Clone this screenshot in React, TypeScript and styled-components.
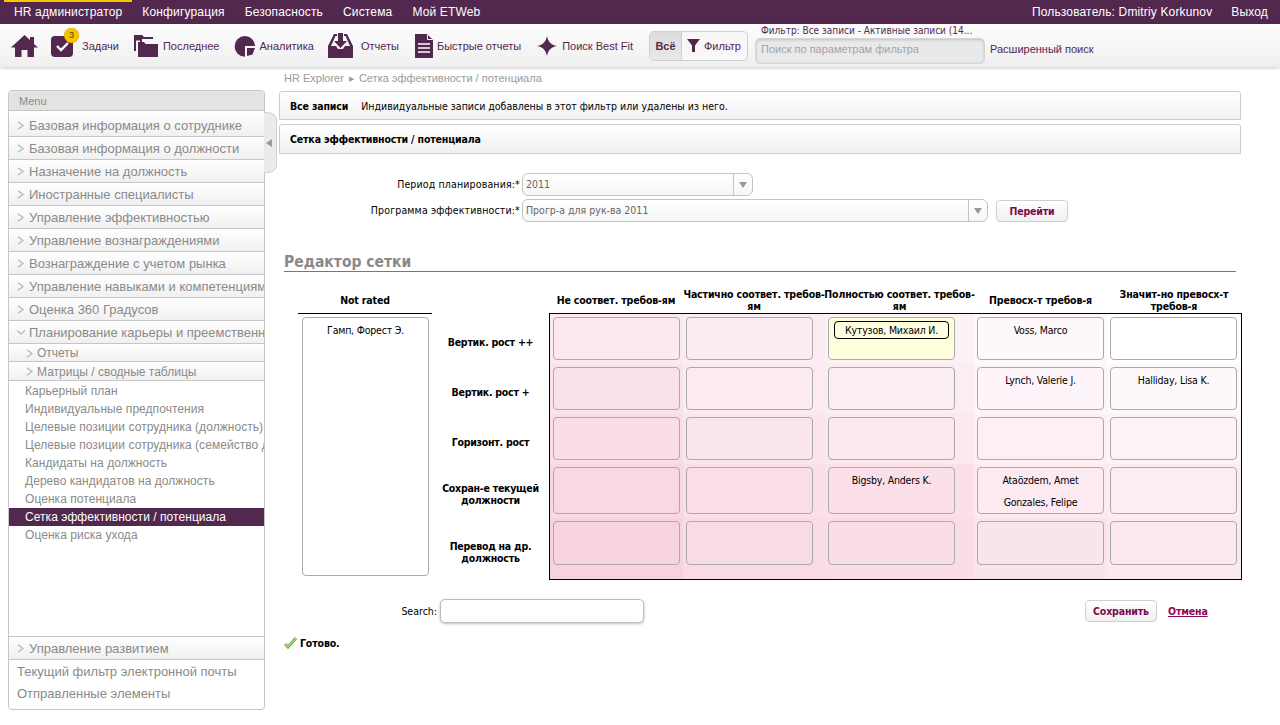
import * as React from 'react';
import styled, { createGlobalStyle } from 'styled-components';

const PURPLE = '#52284f';
const SANS = '"Liberation Sans", Arial, sans-serif';
const VERDANA = '"DejaVu Sans Condensed", "DejaVu Sans", Verdana, sans-serif';

const GlobalStyle = createGlobalStyle`
  html, body { margin: 0; padding: 0; background: #fff; }
  body { font-family: ${SANS}; height: 725px; overflow: hidden; }
  * { box-sizing: border-box; }
`;

const NavBar = styled.div`
  height: 24px;
  background: ${PURPLE};
  display: flex;
  align-items: center;
  padding: 0 12px 0 14px;
  font-size: 12px;
  letter-spacing: 0.15px;
  color: #fff;
`;

const NavItem = styled.span<{ $active?: boolean }>`
  position: relative;
  margin-right: 20px;
  white-space: nowrap;
  &::before {
    content: ${(p) => (p.$active ? '""' : 'none')};
    position: absolute;
    left: -10px;
    right: -10px;
    top: -6px;
    height: 3px;
    background: #f9c400;
  }
`;

const NavRight = styled.div`
  margin-left: auto;
  display: flex;
  gap: 19px;
`;

const Toolbar = styled.div`
  height: 43px;
  background: linear-gradient(#fdfdfd, #efefef);
  box-shadow: 0 1px 3px rgba(0, 0, 0, 0.22);
  display: flex;
  align-items: center;
  padding-left: 11px;
  font-size: 11px;
  color: ${PURPLE};
  position: relative;
`;

const Tool = styled.div<{ $gap: number; $after: number }>`
  position: relative;
  display: flex;
  align-items: center;
  gap: ${(p) => p.$gap}px;
  margin-right: ${(p) => p.$after}px;
  white-space: nowrap;
`;

const Badge = styled.span`
  position: absolute;
  left: 13px;
  top: -7px;
  width: 15px;
  height: 15px;
  border-radius: 50%;
  background: #f8c400;
  color: #5a3d00;
  font-size: 9px;
  line-height: 15px;
  text-align: center;
  box-shadow: 0 0 1px rgba(0, 0, 0, 0.4);
`;

const Segment = styled.div`
  display: flex;
  height: 30px;
  width: 99px;
  margin-left: 2px;
  border: 1px solid #cfcfcf;
  border-radius: 5px;
  overflow: hidden;
  background: #f7f7f7;
`;

const SegmentAll = styled.div`
  width: 32px;
  background: linear-gradient(#dcdcdc, #e8e8e8);
  border-right: 1px solid #cfcfcf;
  font-weight: bold;
  line-height: 28px;
  text-align: center;
`;

const SegmentFilter = styled.div`
  display: flex;
  align-items: center;
  gap: 4px;
  padding-left: 5px;
`;

const FilterBox = styled.div`
  width: 230px;
  margin-left: 7px;
  margin-top: -2px;
`;

const FilterCaption = styled.div`
  font-family: ${VERDANA};
  font-size: 10px;
  line-height: 12px;
  padding-left: 6px;
  margin-bottom: 1px;
  white-space: nowrap;
  overflow: hidden;
`;

const FilterInput = styled.div`
  height: 26px;
  border: 1px solid #d5d5d5;
  border-radius: 5px;
  background: #e9e9e9;
  box-shadow: inset 0 1px 3px rgba(0, 0, 0, 0.18);
  color: #a5a5a5;
  font-size: 11px;
  line-height: 20px;
  padding-left: 5px;
`;

const AdvancedLink = styled.span`
  margin: 7px 0 0 5px;
`;

const Body = styled.div`
  display: flex;
  padding: 0 8px;
`;

const Sidebar = styled.nav`
  position: relative;
  flex: none;
  width: 257px;
  height: 620px;
  margin-top: 23px;
  border: 1px solid #c6c6c6;
  border-radius: 4px;
  display: flex;
  flex-direction: column;
  color: #8a8a8a;
  font-size: 13px;
`;

const MenuHead = styled.div`
  flex: none;
  height: 20px;
  background: #e3e3e1;
  border-bottom: 1px solid #c6c6c6;
  border-radius: 3px 3px 0 0;
  font-size: 11px;
  line-height: 20px;
  padding-left: 10px;
`;

const Section = styled.div<{ $first?: boolean }>`
  flex: none;
  height: ${(p) => (p.$first ? 26 : 23)}px;
  padding-top: ${(p) => (p.$first ? 3 : 0)}px;
  background: linear-gradient(#fff, #f0f0f0);
  border-bottom: 1px solid #c6c6c6;
  display: flex;
  align-items: center;
  gap: 4px;
  padding-left: 8px;
  white-space: nowrap;
  overflow: hidden;
`;

const SubSection = styled.div<{ $h: number }>`
  flex: none;
  height: ${(p) => p.$h}px;
  padding-top: 1px;
  background: linear-gradient(#fff, #f0f0f0);
  border-bottom: 1px solid #c6c6c6;
  display: flex;
  align-items: center;
  gap: 3px;
  padding-left: 17px;
  font-size: 12px;
`;

const ChevronSvg = styled.svg`
  flex: none;
`;

const LeafList = styled.div`
  flex: 1;
  padding-top: 1px;
  border-bottom: 1px solid #c6c6c6;
`;

const Leaf = styled.div<{ $active?: boolean }>`
  height: 18px;
  line-height: 18px;
  font-size: 12px;
  letter-spacing: 0.05px;
  padding-left: 16px;
  white-space: nowrap;
  overflow: hidden;
  background: ${(p) => (p.$active ? PURPLE : 'transparent')};
  color: ${(p) => (p.$active ? '#fff' : '#8a8a8a')};
`;

const BottomLink = styled.div`
  flex: none;
  height: 22px;
  line-height: 22px;
  padding-left: 8px;
`;

const BottomLinks = styled.div`
  padding: 1px 0 4px;
`;

const CollapseTab = styled.div`
  position: absolute;
  left: 255px;
  top: 21px;
  width: 13px;
  height: 61px;
  background: #ebebeb;
  border: 1px solid #d2d2d2;
  border-left: none;
  border-radius: 0 10px 10px 0 / 0 8px 8px 0;
  display: flex;
  align-items: center;
  padding-left: 2px;
  &::after {
    content: '';
    border-style: solid;
    border-width: 4px 6px 4px 0;
    border-color: transparent #9a9a9a transparent transparent;
  }
`;

const Main = styled.main`
  flex: none;
  width: 962px;
  margin-left: 14px;
  font-family: ${VERDANA};
  font-size: 10.5px;
  color: #000;
`;

const Breadcrumb = styled.div`
  height: 22px;
  line-height: 22px;
  padding-left: 5px;
  font-family: ${SANS};
  font-size: 11px;
  color: #9a9a9a;
`;

const Crumb = styled.span`
  margin: 0 5px;
  font-size: 7px;
  vertical-align: 1px;
`;

const Panel = styled.div<{ $h: number; $top: number }>`
  height: ${(p) => p.$h}px;
  margin-top: ${(p) => p.$top}px;
  border: 1px solid #ccc;
  border-radius: 3px 3px 0 0;
  background: linear-gradient(#fff, #f1f1f1);
  display: flex;
  align-items: center;
  padding-left: 10px;
`;

const PanelTitle = styled.b`
  letter-spacing: -0.15px;
  margin-right: 13px;
`;

const Form = styled.div`
  margin-top: 19px;
  display: flex;
  flex-direction: column;
  gap: 3px;
`;

const FormRow = styled.div`
  display: flex;
  align-items: center;
  height: 23px;
`;

const FormLabel = styled.label`
  width: 242px;
  text-align: right;
  padding: 0 1px 2px 0;
  margin-right: 1px;
  letter-spacing: 0.15px;
`;

const Select = styled.div<{ $w: number }>`
  width: ${(p) => p.$w}px;
  height: 23px;
  border: 1px solid #c4c4c4;
  border-radius: 6px;
  background: linear-gradient(#fff, #f6f6f6);
  color: #666;
  line-height: 21px;
  padding-left: 3px;
  display: flex;
  justify-content: space-between;
`;

const SelectArrow = styled.div`
  width: 19px;
  border-left: 1px solid #c4c4c4;
  display: flex;
  align-items: center;
  justify-content: center;
  &::after {
    content: '';
    border-style: solid;
    border-width: 6px 4px 0 4px;
    border-color: #999 transparent transparent transparent;
  }
`;

const Button = styled.div<{ $left: number }>`
  width: 72px;
  height: 22px;
  margin-left: ${(p) => p.$left}px;
  border: 1px solid #cfcfcf;
  border-radius: 4px;
  background: linear-gradient(#fff, #efefef);
  color: #7a0a4c;
  font-weight: bold;
  letter-spacing: -0.15px;
  line-height: 20px;
  text-align: center;
`;

const Heading = styled.h2`
  width: 952px;
  height: 22px;
  margin: 28px 0 0 5px;
  border-bottom: 1px solid #777;
  color: #8a8a8a;
  font-size: 15.5px;
  line-height: 24px;
  font-weight: bold;
`;

const Editor = styled.div`
  display: flex;
  margin: 13px 0 0 19px;
`;

const NotRatedColumn = styled.div`
  width: 134px;
  flex: none;
`;

const NotRatedHead = styled.div`
  height: 29px;
  border-bottom: 1px solid #000;
  font-weight: bold;
  letter-spacing: -0.15px;
  text-align: center;
  line-height: 30px;
`;

const NotRatedBox = styled.div`
  width: 127px;
  height: 259px;
  margin: 3px 0 0 4px;
  border: 1px solid #aaa;
  border-radius: 4px;
`;

const RowLabels = styled.div`
  width: 117px;
  flex: none;
  padding-top: 29px;
`;

const RowLabel = styled.div<{ $h: number }>`
  height: ${(p) => p.$h}px;
  padding: 6px 2px 0;
  display: flex;
  align-items: center;
  justify-content: center;
  text-align: center;
  font-weight: bold;
  letter-spacing: -0.25px;
  line-height: 12px;
`;

const MatrixColumn = styled.div`
  width: 693px;
  flex: none;
`;

const ColumnHeads = styled.div`
  display: grid;
  grid-template-columns: 134px 142px 149px 133px 134px;
  height: 28px;
`;

const ColumnHead = styled.div`
  display: flex;
  align-items: center;
  justify-content: center;
  padding-top: 2px;
  text-align: center;
  font-weight: bold;
  letter-spacing: -0.15px;
  line-height: 12px;
  white-space: nowrap;
`;

const Matrix = styled.div`
  display: grid;
  grid-template-columns: 133px 142px 149px 133px 134px;
  grid-template-rows: 50px 50px 50px 54px 61px;
  border: 1px solid #000;
`;

const Tile = styled.div<{ $bg: string }>`
  background: ${(p) => p.$bg};
  padding: 3px 0 0 3px;
`;

const Cell = styled.div<{ $h: number; $bg?: string }>`
  width: 127px;
  height: ${(p) => p.$h}px;
  border: 1px solid #aaa;
  border-radius: 4px;
  background: ${(p) => p.$bg || 'transparent'};
`;

const Person = styled.div<{ $picked?: boolean }>`
  height: 18px;
  margin: 3px ${(p) => (p.$picked ? 5 : 0)}px 4px;
  line-height: 16px;
  letter-spacing: -0.2px;
  text-align: center;
  white-space: nowrap;
  border: 1px solid ${(p) => (p.$picked ? '#000' : 'transparent')};
  border-radius: 4px;
  background: ${(p) => (p.$picked ? '#ffffe0' : 'transparent')};
`;

const Footer = styled.div`
  display: flex;
  align-items: center;
  height: 24px;
  margin-top: 19px;
`;

const SearchGroup = styled.div`
  width: 365px;
  display: flex;
  justify-content: flex-end;
  align-items: center;
  gap: 3px;
`;

const SearchBox = styled.div`
  width: 204px;
  height: 24px;
  border: 1px solid #bdbdbd;
  border-radius: 5px;
  background: #fff;
  box-shadow: 0 1px 3px rgba(0, 0, 0, 0.25);
`;

const CancelLink = styled.a`
  margin-left: 11px;
  color: #8d0a50;
  font-weight: bold;
  letter-spacing: -0.15px;
  text-decoration: underline;
`;

const Status = styled.div`
  display: flex;
  align-items: center;
  gap: 3px;
  margin: 14px 0 0 5px;
  font-weight: bold;
  letter-spacing: -0.15px;
`;

const BoldTitle = styled.b`
  letter-spacing: -0.15px;
`;

const Chevron = ({ down }: { down?: boolean }) => (
  <ChevronSvg width="8" height="9" viewBox="0 0 8 9" fill="none" stroke="#b5b5b5" strokeWidth="1.2">
    {down ? <path d="M0 2.500l4 3.500 4-3.500" /> : <path d="M1 .8l5 3.700-5 3.700" />}
  </ChevronSvg>
);

const Icon = ({ w, h, children }: { w: number; h: number; children: React.ReactNode }) => (
  <svg width={w} height={h} viewBox={`0 0 ${w} ${h}`} fill={PURPLE}>
    {children}
  </svg>
);

const topSections = [
  'Базовая информация о сотруднике',
  'Базовая информация о должности',
  'Назначение на должность',
  'Иностранные специалисты',
  'Управление эффективностью',
  'Управление вознаграждениями',
  'Вознаграждение с учетом рынка',
  'Управление навыками и компетенциями',
  'Оценка 360 Градусов',
];

const leaves = [
  'Карьерный план',
  'Индивидуальные предпочтения',
  'Целевые позиции сотрудника (должность)',
  'Целевые позиции сотрудника (семейство должностей)',
  'Кандидаты на должность',
  'Дерево кандидатов на должность',
  'Оценка потенциала',
  'Сетка эффективности / потенциала',
  'Оценка риска ухода',
];

const rows = [
  { label: 'Вертик. рост ++', height: 50, cell: 43 },
  { label: 'Вертик. рост +', height: 50, cell: 43 },
  { label: 'Горизонт. рост', height: 50, cell: 43 },
  { label: 'Сохран-е текущей должности', height: 54, cell: 47 },
  { label: 'Перевод на др. должность', height: 61, cell: 44 },
];

const tints = [
  ['#fce8ef', '#fbecf1', '#fcf1f5', '#fef8fb', '#ffffff'],
  ['#fae2ea', '#fbeaef', '#fbeef3', '#fdf5f9', '#fef8fb'],
  ['#f9dde7', '#fbe5ec', '#fbe9ef', '#fcf0f4', '#fdf3f7'],
  ['#f9d8e5', '#fadfe8', '#fbdfe9', '#fde9f0', '#fcedf2'],
  ['#f6d3df', '#f9dbe5', '#fbdde7', '#fae4ec', '#fce9ef'],
];

const people: Record<string, string[]> = {
  '0-3': ['Voss, Marco'],
  '1-3': ['Lynch, Valerie J.'],
  '1-4': ['Halliday, Lisa K.'],
  '3-2': ['Bigsby, Anders K.'],
  '3-3': ['Ataözdem, Amet', 'Gonzales, Felipe'],
};

const App = () => (
  <>
    <GlobalStyle />
    <NavBar>
      <NavItem $active>HR администратор</NavItem>
      <NavItem>Конфигурация</NavItem>
      <NavItem>Безопасность</NavItem>
      <NavItem>Система</NavItem>
      <NavItem>Мой ETWeb</NavItem>
      <NavRight>
        <span>Пользователь: Dmitriy Korkunov</span>
        <span>Выход</span>
      </NavRight>
    </NavBar>
    <Toolbar>
      <Tool $gap={0} $after={13}>
        <Icon w={27} h={22}>
          <path d="M13.500 0L19 5V2h4v7l4 3.500h-4V22h-6.500v-7h-6v7H4v-9.500H0z" />
        </Icon>
      </Tool>
      <Tool $gap={9} $after={15}>
        <Icon w={22} h={22}>
          <rect y="1" width="22" height="21" rx="4" />
          <path d="M6 11l4 4 7-7" fill="none" stroke="#fff" strokeWidth="2.400" />
        </Icon>
        <Badge>3</Badge>
        Задачи
      </Tool>
      <Tool $gap={5} $after={15}>
        <Icon w={24} h={22}>
          <path d="M0 0h8l2 2h9v2H8v15H6V5.500H2V16H0z" />
          <path d="M4 7h6l1.500 2H24v13H4z" />
        </Icon>
        Последнее
      </Tool>
      <Tool $gap={4} $after={14}>
        <Icon w={21} h={22}>
          <path d="M11 1a10 10 0 0 1 10 10H11v10.800A10.400 10.400 0 1 1 11 1z" />
          <path d="M13 13h8l-2.500 6.500L13 21z" />
        </Icon>
        Аналитика
      </Tool>
      <Tool $gap={8} $after={16}>
        <Icon w={25} h={25}>
          <path d="M6 1h3v2H7.500L3 13h5l2 3h5l2-3h5L17.500 3H16V1h3l6 12v12H0V13z" />
          <path d="M10 0h5v8h4l-6.500 7L6 8h4z" />
        </Icon>
        Отчеты
      </Tool>
      <Tool $gap={4} $after={16}>
        <Icon w={18} h={24}>
          <path d="M0 0h12l6 6v18H0z" />
          <path d="M3 10h12M3 14h12M3 18h12" stroke="#fff" strokeWidth="1.600" />
          <path d="M12.500 .5v5h5" fill="none" stroke="#fff" strokeWidth="1" />
        </Icon>
        Быстрые отчеты
      </Tool>
      <Tool $gap={5} $after={14}>
        <Icon w={20} h={20}>
          <path d="M10 0c1.200 5.500 3.500 8.800 10 10-6.500 1.200-8.800 4.500-10 10-1.200-5.500-3.500-8.800-10-10 6.500-1.200 8.800-4.500 10-10z" />
        </Icon>
        Поиск Best Fit
      </Tool>
      <Segment>
        <SegmentAll>Всё</SegmentAll>
        <SegmentFilter>
          <Icon w={13} h={13}>
            <path d="M0 0h13L8 6.500V13H5V6.500z" />
          </Icon>
          Фильтр
        </SegmentFilter>
      </Segment>
      <FilterBox>
        <FilterCaption>Фильтр: Все записи - Активные записи (14...</FilterCaption>
        <FilterInput>Поиск по параметрам фильтра</FilterInput>
      </FilterBox>
      <AdvancedLink>Расширенный поиск</AdvancedLink>
    </Toolbar>
    <Body>
      <Sidebar>
        <MenuHead>Menu</MenuHead>
        {topSections.map((name, i) => (
          <Section key={name} $first={i === 0}>
            <Chevron />
            {name}
          </Section>
        ))}
        <Section>
          <Chevron down />
          Планирование карьеры и преемственности
        </Section>
        <SubSection $h={18}>
          <Chevron />
          Отчеты
        </SubSection>
        <SubSection $h={19}>
          <Chevron />
          Матрицы / сводные таблицы
        </SubSection>
        <LeafList>
          {leaves.map((name) => (
            <Leaf key={name} $active={name.startsWith('Сетка')}>
              {name}
            </Leaf>
          ))}
        </LeafList>
        <Section>
          <Chevron />
          Управление развитием
        </Section>
        <BottomLinks>
          <BottomLink>Текущий фильтр электронной почты</BottomLink>
          <BottomLink>Отправленные элементы</BottomLink>
        </BottomLinks>
        <CollapseTab />
      </Sidebar>
      <Main>
        <Breadcrumb>
          HR Explorer<Crumb>▶</Crumb>Сетка эффективности / потенциала
        </Breadcrumb>
        <Panel $h={29} $top={2}>
          <PanelTitle>Все записи</PanelTitle>
          Индивидуальные записи добавлены в этот фильтр или удалены из него.
        </Panel>
        <Panel $h={30} $top={4}>
          <BoldTitle>Сетка эффективности / потенциала</BoldTitle>
        </Panel>
        <Form>
          <FormRow>
            <FormLabel>Период планирования:*</FormLabel>
            <Select $w={231}>
              2011
              <SelectArrow />
            </Select>
          </FormRow>
          <FormRow>
            <FormLabel>Программа эффективности:*</FormLabel>
            <Select $w={466}>
              Прогр-а для рук-ва 2011
              <SelectArrow />
            </Select>
            <Button $left={8}>Перейти</Button>
          </FormRow>
        </Form>
        <Heading>Редактор сетки</Heading>
        <Editor>
          <NotRatedColumn>
            <NotRatedHead>Not rated</NotRatedHead>
            <NotRatedBox>
              <Person>Гамп, Форест Э.</Person>
            </NotRatedBox>
          </NotRatedColumn>
          <RowLabels>
            {rows.map((r) => (
              <RowLabel key={r.label} $h={r.height}>
                {r.label}
              </RowLabel>
            ))}
          </RowLabels>
          <MatrixColumn>
            <ColumnHeads>
              <ColumnHead>Не соответ. требов-ям</ColumnHead>
              <ColumnHead>
                Частично соответ. требов-
                <br />
                ям
              </ColumnHead>
              <ColumnHead>
                Полностью соответ. требов-
                <br />
                ям
              </ColumnHead>
              <ColumnHead>Превосх-т требов-я</ColumnHead>
              <ColumnHead>
                Значит-но превосх-т
                <br />
                требов-я
              </ColumnHead>
            </ColumnHeads>
            <Matrix>
              {rows.map((r, y) =>
                tints[y].map((tint, x) => {
                  const picked = y === 0 && x === 2;
                  return (
                    <Tile key={`${y}-${x}`} $bg={tint}>
                      <Cell $h={r.cell} $bg={picked ? '#ffffdc' : undefined}>
                        {picked && <Person $picked>Кутузов, Михаил И.</Person>}
                        {(people[`${y}-${x}`] || []).map((name) => (
                          <Person key={name}>{name}</Person>
                        ))}
                      </Cell>
                    </Tile>
                  );
                }),
              )}
            </Matrix>
          </MatrixColumn>
        </Editor>
        <Footer>
          <SearchGroup>
            Search:
            <SearchBox />
          </SearchGroup>
          <Button $left={441}>Сохранить</Button>
          <CancelLink>Отмена</CancelLink>
        </Footer>
        <Status>
          <svg width="13" height="12" viewBox="0 0 13 12" fill="none">
            <path d="M1 7l3 3 8-9" stroke="#6fae3f" strokeWidth="3" />
            <path d="M1 7l3 3 8-9" stroke="#cfe8b4" strokeWidth="1" />
          </svg>
          Готово.
        </Status>
      </Main>
    </Body>
  </>
);

export default App;
